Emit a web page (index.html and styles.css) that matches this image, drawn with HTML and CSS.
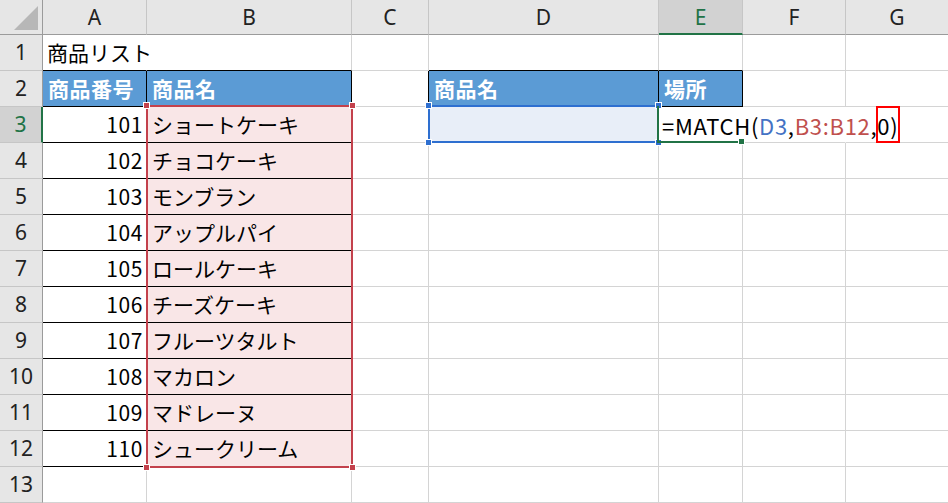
FILE: index.html
```html
<!DOCTYPE html>
<html lang="ja">
<head>
<meta charset="utf-8">
<link rel="stylesheet" href="styles.css">
</head>
<body>
<div class="sheet">
  <div class="grid">
    <div class="corner"><span class="tri"></span></div>
    <div class="ch">A</div>
    <div class="ch">B</div>
    <div class="ch">C</div>
    <div class="ch">D</div>
    <div class="ch ch-act">E</div>
    <div class="ch">F</div>
    <div class="ch">G</div>

    <div class="rh">1</div>
    <div class="c bb nr"><span class="ov">商品リスト</span></div>
    <div class="c bb"></div>
    <div class="c"></div>
    <div class="c bb"></div>
    <div class="c bb"></div>
    <div class="c"></div>
    <div class="c"></div>

    <div class="rh">2</div>
    <div class="c hd">商品番号</div>
    <div class="c hd">商品名</div>
    <div class="c br"></div>
    <div class="c hd">商品名</div>
    <div class="c hd">場所</div>
    <div class="c"></div>
    <div class="c"></div>

    <div class="rh rh-act">3</div>
    <div class="c num">101</div>
    <div class="c nm">ショートケーキ</div>
    <div class="c"></div>
    <div class="c sel"></div>
    <div class="c nr fx"><span class="ov">=MATCH(<span class="rb">D3</span>,<span class="rr">B3:B12</span>,0)</span></div>
    <div class="c nr"></div>
    <div class="c"></div>

    <div class="rh">4</div>
    <div class="c num">102</div>
    <div class="c nm">チョコケーキ</div>
    <div class="c"></div><div class="c"></div><div class="c"></div><div class="c"></div><div class="c"></div>

    <div class="rh">5</div>
    <div class="c num">103</div>
    <div class="c nm">モンブラン</div>
    <div class="c"></div><div class="c"></div><div class="c"></div><div class="c"></div><div class="c"></div>

    <div class="rh">6</div>
    <div class="c num">104</div>
    <div class="c nm">アップルパイ</div>
    <div class="c"></div><div class="c"></div><div class="c"></div><div class="c"></div><div class="c"></div>

    <div class="rh">7</div>
    <div class="c num">105</div>
    <div class="c nm">ロールケーキ</div>
    <div class="c"></div><div class="c"></div><div class="c"></div><div class="c"></div><div class="c"></div>

    <div class="rh">8</div>
    <div class="c num">106</div>
    <div class="c nm">チーズケーキ</div>
    <div class="c"></div><div class="c"></div><div class="c"></div><div class="c"></div><div class="c"></div>

    <div class="rh">9</div>
    <div class="c num">107</div>
    <div class="c nm">フルーツタルト</div>
    <div class="c"></div><div class="c"></div><div class="c"></div><div class="c"></div><div class="c"></div>

    <div class="rh">10</div>
    <div class="c num">108</div>
    <div class="c nm">マカロン</div>
    <div class="c"></div><div class="c"></div><div class="c"></div><div class="c"></div><div class="c"></div>

    <div class="rh">11</div>
    <div class="c num">109</div>
    <div class="c nm">マドレーヌ</div>
    <div class="c"></div><div class="c"></div><div class="c"></div><div class="c"></div><div class="c"></div>

    <div class="rh">12</div>
    <div class="c num">110</div>
    <div class="c nm">シュークリーム</div>
    <div class="c"></div><div class="c"></div><div class="c"></div><div class="c"></div><div class="c"></div>

    <div class="rh">13</div>
    <div class="c"></div><div class="c"></div><div class="c"></div><div class="c"></div><div class="c"></div><div class="c"></div><div class="c"></div>
  </div>

  <div class="rng rng-red">
    <i class="h h-tl"></i><i class="h h-tr"></i><i class="h h-bl"></i><i class="h h-br"></i>
  </div>
  <div class="rng rng-blue">
    <i class="h h-tl"></i><i class="h h-tr"></i><i class="h h-bl"></i><i class="h h-br"></i>
  </div>
  <div class="act"><i class="fill"></i></div>
  <div class="mark"></div>
</div>
</body>
</html>
```
FILE: styles.css
```css
html, body {
  margin: 0;
  padding: 0;
  background: #ffffff;
  overflow: hidden;
}
body {
  font-family: "Noto Sans CJK JP", "Noto Sans", sans-serif;
  color: #000;
}
.sheet {
  position: relative;
  width: 948px;
  height: 503px;
  overflow: hidden;
}
.grid {
  display: grid;
  grid-template-columns: 43px 104px 205px 77px 230px 84px 103px 103px;
  grid-template-rows: 35px repeat(13, 36px);
  width: 949px;
}
.grid > div {
  box-sizing: border-box;
  display: flex;
  align-items: center;
  font-size: 21px;
  line-height: 1;
  white-space: nowrap;
}
.corner {
  position: relative;
  background: #e6e6e6;
  border-right: 1px solid #9b9b9b;
  border-bottom: 1px solid #9b9b9b;
}
.tri {
  position: absolute;
  right: 4px;
  bottom: 4px;
  width: 0;
  height: 0;
  border-left: 24px solid transparent;
  border-bottom: 24px solid #b7b7b7;
}
.grid > .ch {
  justify-content: center;
  background: #e6e6e6;
  border-right: 1px solid #c6c6c6;
  border-bottom: 1px solid #9b9b9b;
  color: #222;
  font-family: "Noto Sans", "Noto Sans CJK JP", sans-serif;
  font-size: 21px;
  padding-top: 1px;
}
.grid > .ch-act {
  background: #d2d2d2;
  color: #217346;
  border-bottom: 2px solid #217346;
}
.grid > .rh {
  justify-content: center;
  background: #e6e6e6;
  border-right: 1px solid #9b9b9b;
  border-bottom: 1px solid #c6c6c6;
  color: #222;
  font-family: "Noto Sans", "Noto Sans CJK JP", sans-serif;
  font-size: 21px;
}
.grid > .rh-act {
  background: #d2d2d2;
  color: #217346;
  border-right: 2px solid #217346;
}
.c {
  border-right: 1px solid #d4d4d4;
  border-bottom: 1px solid #d4d4d4;
  padding-left: 4px;
}
.bb { border-bottom-color: #000; }
.br { border-right-color: #000; }
.nr { border-right-color: transparent; }
.ov {
  position: relative;
  z-index: 2;
  overflow: visible;
}
.hd {
  background: #5b9bd5;
  color: #fff;
  font-weight: 700;
  border-right-color: #000;
  border-bottom-color: #000;
  padding-left: 5px;
  letter-spacing: 0.5px;
}
.num {
  justify-content: flex-end;
  padding-left: 0;
  padding-right: 3px;
  letter-spacing: 0.6px;
  border-right-color: #000;
  border-bottom-color: #000;
}
.nm {
  background: #f9e6e7;
  border-right-color: #000;
  border-bottom-color: #000;
  padding-left: 5px;
}
.sel { background: #e8eef8; }
.grid > .fx {
  padding-left: 3px;
  font-size: 22px;
  letter-spacing: 0.7px;
}
.rb { color: #4472c4; }
.rr { color: #c0504d; }

.rng {
  position: absolute;
  box-sizing: border-box;
  border: 2px solid;
  z-index: 3;
}
.rng-red {
  left: 146px;
  top: 105px;
  width: 207px;
  height: 363px;
  border-color: #c3414c;
  color: #c3414c;
}
.rng-blue {
  left: 428px;
  top: 105px;
  width: 231px;
  height: 38px;
  border-color: #2e6fd0;
  color: #2e6fd0;
}
.h {
  position: absolute;
  width: 5px;
  height: 5px;
  background: currentColor;
  border: 1px solid #fff;
}
.h-tl { left: -5px; top: -5px; }
.h-tr { right: -5px; top: -5px; }
.h-bl { left: -5px; bottom: -5px; }
.h-br { right: -5px; bottom: -5px; }

.act {
  position: absolute;
  left: 657px;
  top: 106px;
  width: 85px;
  height: 37px;
  box-sizing: border-box;
  border-left: 2px solid #217346;
  border-bottom: 2px solid #217346;
  z-index: 3;
}
.fill {
  position: absolute;
  right: -3px;
  bottom: -4px;
  width: 5px;
  height: 5px;
  background: #217346;
  border: 1px solid #fff;
}
.mark {
  position: absolute;
  left: 876px;
  top: 106px;
  width: 24px;
  height: 37px;
  box-sizing: border-box;
  border: 2px solid #ff0000;
  z-index: 4;
}
```
